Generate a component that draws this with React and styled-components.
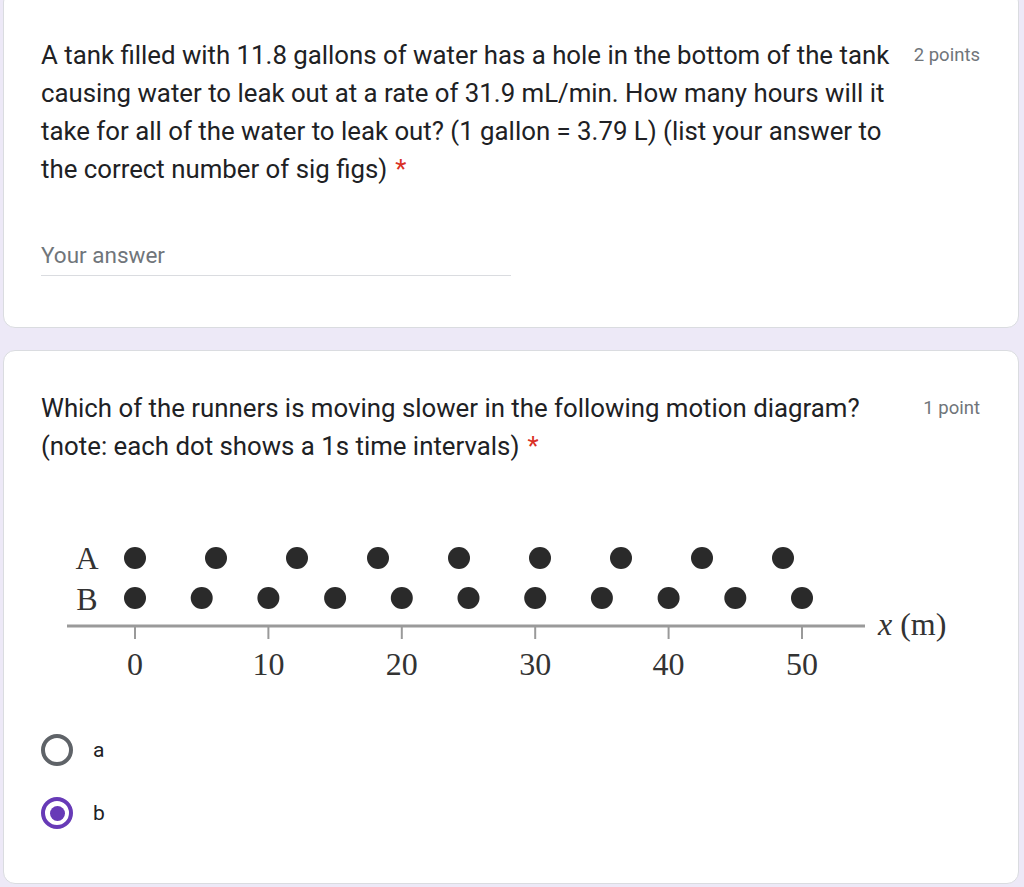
import React from 'react';
import styled, { createGlobalStyle } from 'styled-components';

const GlobalStyle = createGlobalStyle`
  html, body {
    margin: 0;
    padding: 0;
    background: #ede9f7;
  }
  body {
    font-family: Roboto, "Noto Sans", Arial, sans-serif;
    color: #202124;
    overflow: hidden;
  }
`;

const Page = styled.div`
  display: flex;
  flex-direction: column;
  gap: 22px;
  padding: 0 5px 0 3px;
  height: 887px;
  box-sizing: border-box;
`;

const Card = styled.div`
  background: #fff;
  border: 1px solid #dadce0;
  border-radius: 12px;
  box-sizing: border-box;
  height: ${({ height }) => height}px;
  margin-top: ${({ offset }) => offset || 0}px;
  padding: ${({ top }) => top}px 38px 0 37px;
`;

const QuestionHeader = styled.div`
  display: flex;
  align-items: flex-start;
  justify-content: space-between;
`;

const QuestionText = styled.div`
  width: 852px;
  font-size: 25.8px;
  line-height: 38px;
`;

const Required = styled.span`
  color: #d93025;
  margin-left: 8px;
`;

const Points = styled.div`
  font-size: 18.5px;
  line-height: 38px;
  color: #70757a;
  white-space: nowrap;
`;

const AnswerField = styled.div`
  width: 470px;
  margin-top: 53px;
  padding-bottom: 6px;
  border-bottom: 1px solid #dadce0;
  font-size: 22.5px;
  line-height: 28px;
  color: #70757a;
`;

const Diagram = styled.svg`
  display: block;
  margin: 70px 0 0 19px;
`;

const Options = styled.div`
  display: flex;
  flex-direction: column;
  gap: 31px;
  margin-top: 49px;
`;

const Option = styled.label`
  display: flex;
  align-items: center;
  gap: 20px;
  font-size: 21px;
  color: #202124;
  height: 32px;
`;

const Radio = styled.span`
  width: 32px;
  height: 32px;
  border-radius: 50%;
  box-sizing: border-box;
  border: 4px solid ${({ checked }) => (checked ? '#673ab7' : '#5f6368')};
  display: flex;
  align-items: center;
  justify-content: center;
  &::after {
    content: '';
    width: 15px;
    height: 15px;
    border-radius: 50%;
    background: #673ab7;
    display: ${({ checked }) => (checked ? 'block' : 'none')};
  }
`;

const aDots = Array.from({ length: 9 }, (_, i) => 75 + i * 81);
const bDots = Array.from({ length: 11 }, (_, i) => 75 + i * 66.7);
const ticks = [0, 10, 20, 30, 40, 50];

const MotionDiagram = () => (
  <Diagram width="910" height="150" viewBox="0 0 910 150">
    <g fontFamily='"Liberation Serif", "Times New Roman", serif' fontSize="32" fill="#333">
      <text x="27" y="34" textAnchor="middle">A</text>
      <text x="27" y="75" textAnchor="middle">B</text>
    </g>
    {aDots.map((x) => (
      <circle key={'a' + x} cx={x} cy="23" r="11" fill="#2a2a2a" />
    ))}
    {bDots.map((x) => (
      <circle key={'b' + x} cx={x} cy="63" r="11" fill="#2a2a2a" />
    ))}
    <line x1="7" y1="91" x2="805" y2="91" stroke="#9a9a9a" strokeWidth="3" />
    {ticks.map((t, i) => {
      const x = 75 + i * 133.4;
      return (
        <g key={t}>
          <line x1={x} y1="92" x2={x} y2="104" stroke="#9a9a9a" strokeWidth="2" />
          <text
            x={x}
            y="140"
            textAnchor="middle"
            fontFamily='"Liberation Serif", "Times New Roman", serif'
            fontSize="32"
            fill="#333"
          >
            {t}
          </text>
        </g>
      );
    })}
    <text x="818" y="100" fontFamily='"Liberation Serif", "Times New Roman", serif' fontSize="32" fill="#333">
      <tspan fontStyle="italic">x</tspan> (m)
    </text>
  </Diagram>
);

export default function App() {
  return (
    <>
      <GlobalStyle />
      <Page>
        <Card height={338} offset={-10} top={45}>
          <QuestionHeader>
            <QuestionText>
              A tank filled with 11.8 gallons of water has a hole in the bottom of the tank causing water to leak
              out at a rate of 31.9 mL/min. How many hours will it take for all of the water to leak out? (1 gallon
              = 3.79 L) (list your answer to the correct number of sig figs)
              <Required>*</Required>
            </QuestionText>
            <Points>2 points</Points>
          </QuestionHeader>
          <AnswerField>Your answer</AnswerField>
        </Card>
        <Card height={534} top={38}>
          <QuestionHeader>
            <QuestionText>
              Which of the runners is moving slower in the following motion diagram? (note: each dot shows a 1s
              time intervals)
              <Required>*</Required>
            </QuestionText>
            <Points>1 point</Points>
          </QuestionHeader>
          <MotionDiagram />
          <Options>
            <Option>
              <Radio />
              a
            </Option>
            <Option>
              <Radio checked />
              b
            </Option>
          </Options>
        </Card>
      </Page>
    </>
  );
}
